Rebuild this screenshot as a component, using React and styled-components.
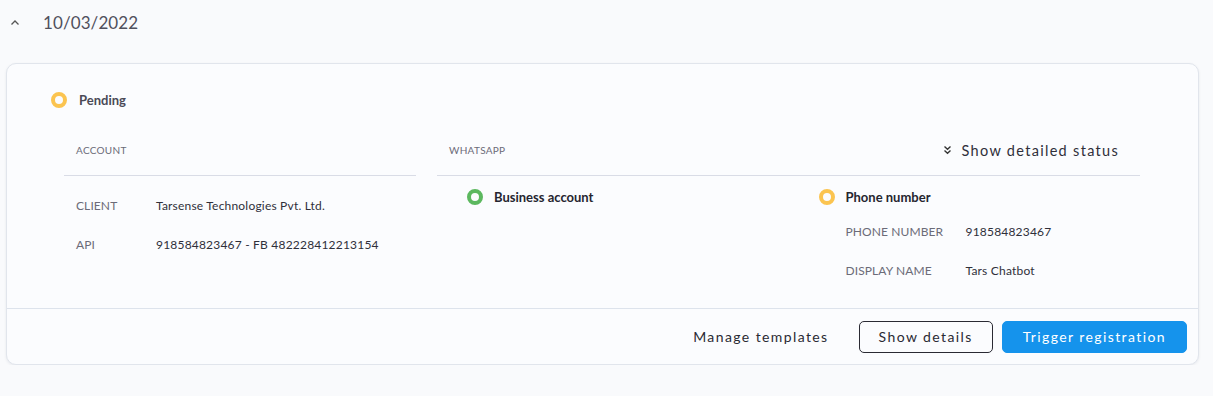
import React from "react";
import styled, { createGlobalStyle } from "styled-components";

const Global = createGlobalStyle`
  html, body { margin: 0; padding: 0; background: #f9fafc; }
  body { font-family: Lato, "Open Sans", sans-serif; color: #2f2f3a; }
  * { box-sizing: border-box; }
`;

const Page = styled.div`
  padding: 0 14px 0 6px;
  width: 1213px;
`;

const DateBar = styled.div`
  display: flex;
  align-items: center;
  height: 45px;
  padding-left: 3px;
  gap: 22px;
  margin-bottom: 18px;
`;

const Toggle = styled.span`
  display: inline-flex;
  width: 12px;
  justify-content: center;
  color: #555;
`;

const DateText = styled.span`
  font-size: 17px;
  color: #50505c;
  letter-spacing: 0.1px;
`;

const Card = styled.div`
  width: 1193px;
  background: #fbfcfe;
  border: 1px solid #e1e5ec;
  border-radius: 10px;
  box-shadow: 0 1px 3px rgba(30, 40, 70, 0.08);
`;

const Body = styled.div`
  padding: 26px 57px 0 57px;
  height: 244px;
`;

const StatusLine = styled.div`
  display: flex;
  align-items: center;
  gap: ${(p) => p.$gap || 11}px;
  font-size: 13px;
  font-weight: 700;
  color: ${(p) => p.$color || "#4a4a56"};
  height: 20px;
  margin-left: ${(p) => p.$indent || 0}px;
`;

const Dot = styled.span`
  width: 16px;
  height: 16px;
  border-radius: 50%;
  border: 4px solid ${(p) => p.$color};
  flex: none;
`;

const Columns = styled.div`
  display: grid;
  grid-template-columns: 352px 703px;
  column-gap: 21px;
  margin-top: 23px;
`;

const ColHead = styled.div`
  display: flex;
  align-items: center;
  justify-content: space-between;
  height: 43px;
  border-bottom: 1px solid #d9dce6;
  padding: 0 21px 8px 12px;
`;

const SectionLabel = styled.span`
  font-size: 10px;
  color: #6b6b78;
  text-transform: uppercase;
  letter-spacing: 0.3px;
`;

const DetailToggle = styled.span`
  display: inline-flex;
  align-items: center;
  gap: 10px;
  font-size: 14.5px;
  letter-spacing: 1.3px;
  color: #2f2f3a;
`;

const FieldList = styled.div`
  display: flex;
  flex-direction: column;
  padding: ${(p) => p.$pad || "10px 0 0 12px"};
`;

const Field = styled.div`
  display: grid;
  grid-template-columns: ${(p) => p.$label}px 1fr;
  align-items: center;
  height: 39px;
  font-size: 12px;
`;

const FieldLabel = styled.span`
  color: #6b6b78;
  text-transform: uppercase;
  letter-spacing: 0.1px;
`;

const FieldValue = styled.span`
  color: #2f2f3a;
  letter-spacing: 0.2px;
`;

const Split = styled.div`
  display: grid;
  grid-template-columns: 1fr 1fr;
  padding-top: 11px;
`;

const SubCol = styled.div`
  padding-left: 30px;
`;

const Footer = styled.div`
  border-top: 1px solid #dde3ec;
  display: flex;
  justify-content: flex-end;
  align-items: center;
  gap: 9px;
  height: 56px;
  padding: 0 11px 0 0;
`;

const Button = styled.button`
  font-family: Lato, "Open Sans", sans-serif;
  font-size: 14px;
  letter-spacing: 1.4px;
  height: 32px;
  border-radius: 5px;
  padding: 0 ${(p) => p.$pad || 19}px;
  cursor: pointer;
  border: 1px solid
    ${(p) => (p.$variant === "primary" ? "#1593ec" : p.$variant === "outline" ? "#2a2a33" : "transparent")};
  background: ${(p) => (p.$variant === "primary" ? "#1593ec" : "transparent")};
  color: ${(p) => (p.$variant === "primary" ? "#ffffff" : "#2a2a33")};
`;

const ChevronUp = () => (
  <svg width="10" height="7" viewBox="0 0 10 7">
    <path d="M1.5 5.5 L5 2 L8.5 5.5" fill="none" stroke="#555" strokeWidth="1.3" />
  </svg>
);

const ChevronsDown = () => (
  <svg width="9" height="10" viewBox="0 0 9 10">
    <path d="M1.5 1.5 L4.5 4.2 L7.5 1.5 M1.5 5.5 L4.5 8.2 L7.5 5.5" fill="none" stroke="#333" strokeWidth="1.4" />
  </svg>
);

export default function App() {
  return (
    <>
      <Global />
      <Page>
        <DateBar>
          <Toggle>
            <ChevronUp />
          </Toggle>
          <DateText>10/03/2022</DateText>
        </DateBar>
        <Card>
          <Body>
            <StatusLine $indent={-13} $gap={12}>
              <Dot $color="#fbc450" />
              Pending
            </StatusLine>
            <Columns>
              <div>
                <ColHead>
                  <SectionLabel>Account</SectionLabel>
                </ColHead>
                <FieldList>
                  <Field $label={80}>
                    <FieldLabel>Client</FieldLabel>
                    <FieldValue>Tarsense Technologies Pvt. Ltd.</FieldValue>
                  </Field>
                  <Field $label={80}>
                    <FieldLabel>API</FieldLabel>
                    <FieldValue>918584823467 - FB 482228412213154</FieldValue>
                  </Field>
                </FieldList>
              </div>
              <div>
                <ColHead>
                  <SectionLabel>WhatsApp</SectionLabel>
                  <DetailToggle>
                    <ChevronsDown />
                    Show detailed status
                  </DetailToggle>
                </ColHead>
                <Split>
                  <SubCol>
                    <StatusLine $color="#25252f">
                      <Dot $color="#5cb85f" />
                      Business account
                    </StatusLine>
                  </SubCol>
                  <SubCol>
                    <StatusLine $color="#25252f">
                      <Dot $color="#fbc450" />
                      Phone number
                    </StatusLine>
                    <FieldList $pad="5px 0 0 27px">
                      <Field $label={120}>
                        <FieldLabel>Phone number</FieldLabel>
                        <FieldValue>918584823467</FieldValue>
                      </Field>
                      <Field $label={120}>
                        <FieldLabel>Display name</FieldLabel>
                        <FieldValue>Tars Chatbot</FieldValue>
                      </Field>
                    </FieldList>
                  </SubCol>
                </Split>
              </div>
            </Columns>
          </Body>
          <Footer>
            <Button $pad={20}>Manage templates</Button>
            <Button $variant="outline">Show details</Button>
            <Button $variant="primary" $pad={20}>
              Trigger registration
            </Button>
          </Footer>
        </Card>
      </Page>
    </>
  );
}
